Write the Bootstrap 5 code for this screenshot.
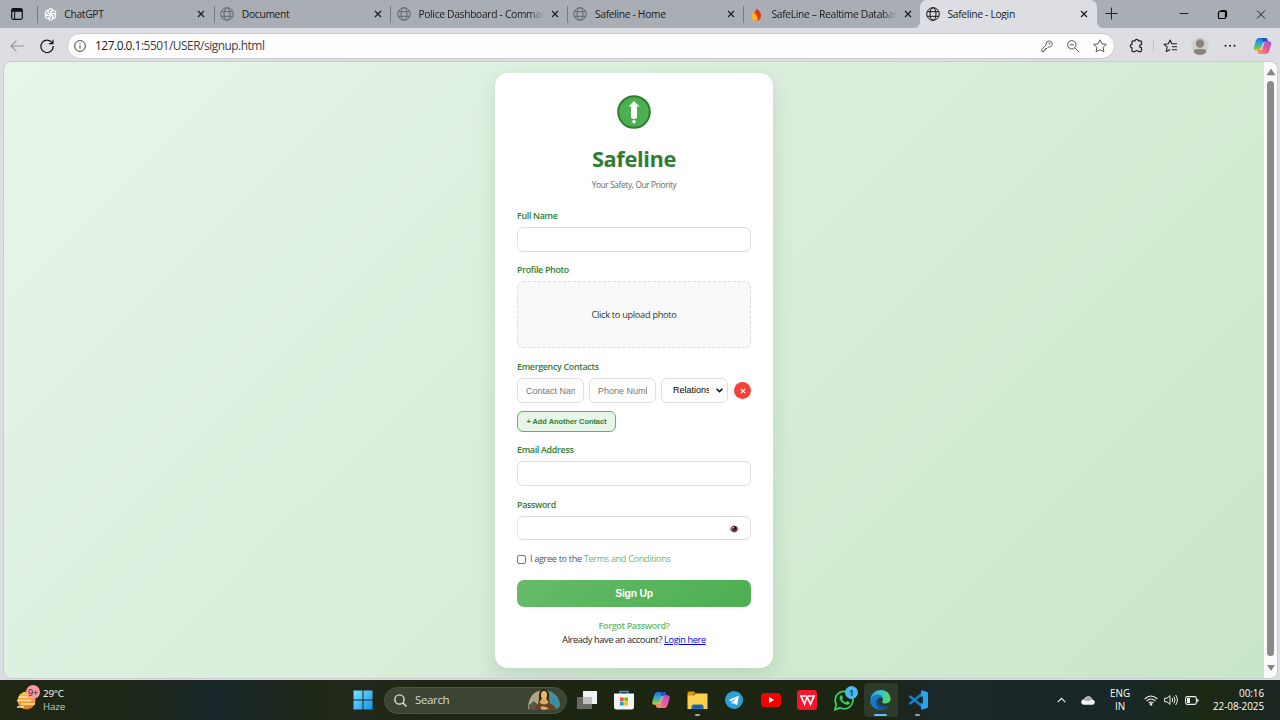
<!DOCTYPE html>
<html lang="en">
<head>
<meta charset="utf-8">
<meta name="viewport" content="width=device-width, initial-scale=1">
<title>Safeline - Login</title>
<link href="https://cdn.jsdelivr.net/npm/bootstrap@5.3.0/dist/css/bootstrap.min.css" rel="stylesheet">
<style>
body{width:1280px;height:720px;overflow:hidden;background:#dcdee3;font-family:"Open Sans","Noto Sans",sans-serif;font-size:11px;line-height:1.2;color:#1b1b1b}
svg{display:block;flex:none;overflow:visible}
/* browser chrome */
.tabstrip{height:28px;background:linear-gradient(#a9aeb5 50%,#dcdee3 50%)}
.tabs-left{width:920px;background:#a9aeb5;border-radius:0 0 6px 0}
.tabs-right{background:#a9aeb5;border-radius:0 0 0 6px}
.tab-menu{width:37.3px;padding-left:11px}
.btab{width:176.7px;padding-left:5.5px}
.btab.sep{border-left:1px solid #777b80}
.sepwrap{height:17px}
.btab .ttl{margin-left:7.5px;width:128.5px;white-space:nowrap;overflow:hidden;font-size:10.3px;letter-spacing:-.33px}
.btab .fade-end{-webkit-mask-image:linear-gradient(90deg,#000 86%,transparent 98%)}
.active-tab{width:177px;background:#dcdee3;border-radius:7px 7px 0 0;padding-left:6px}
.toolbar{height:34px;padding:1px 8px 0 10px}
.addr{width:1048px;height:26px;background:#fdfdfd;border:1px solid #c9cbd1;border-radius:13px;margin-left:13px;padding:0 7px 0 6px}
.addr .url{font-size:11.9px;letter-spacing:-.47px;color:#404040;margin-left:9px}
/* page viewport */
.viewport{margin:0 3px 0 4px;height:616px;border-radius:7px;overflow:hidden;box-shadow:0 0 0 1px #c9ccd1}
.page{width:1260px;background:linear-gradient(135deg,#e8f5e9 0%,#c8e6c9 100%);padding-top:11px}
.sbar{width:13px;background:#fbfbfb;padding:7px 0 7px}
.thumb{width:7px;background:#8a8a8a;border-radius:4px;margin:6px 0 9px}
.signup{width:278px;height:595px;background:#fff;border-radius:13px;padding:22px 22px 0;box-shadow:0 7px 20px rgba(46,90,50,.15);color:#333}
.signup h1{font-size:21.8px;font-weight:700;color:#2e7d32;line-height:28px;margin:15.5px 0 0;letter-spacing:-.35px}
.tagline{font-size:8.3px;line-height:12px;color:#666;margin-top:6.5px;margin-bottom:19px;letter-spacing:-.35px}
.lbl{font-size:8.9px;font-weight:600;line-height:12px;height:12px;color:#2e7d32;margin-bottom:5px;display:block;letter-spacing:-.3px}
.field,.form-control.field,.form-select.field{height:24.5px;min-height:0;border:1px solid #dedede;border-radius:6px;background-color:#fff;font-family:"Liberation Sans",Arial,sans-serif;font-size:9px;line-height:1.2;padding:0 8px;margin-bottom:12.5px}
.field::placeholder{color:#757575}
.upload{height:67px;border:1px dashed #dcdcdc;border-radius:6px;background:#f8f9f8;font-size:9.2px;margin-bottom:13px;letter-spacing:-.28px}
.trio{gap:5px;margin-bottom:8px;height:25px}
.trio .field.field{width:67px;flex:none;margin:0;height:25px}
.trio .form-select.field{color:#000;padding:0 18px 0 11px;background-image:url("data:image/svg+xml,%3Csvg xmlns='http://www.w3.org/2000/svg' viewBox='0 0 7 5'%3E%3Cpath d='M.6.8l2.900 2.900L6.400.8' fill='none' stroke='%23000' stroke-width='1.400'/%3E%3C/svg%3E");background-size:7px 5px;background-position:right 4px center}
.del{width:17px;height:17px;border-radius:50%;background:#f44336;margin-left:1px}
.add{width:99px;height:21px;border:1px solid #5cb560;border-radius:6px;background:#e8f5e9;color:#2e7d32;font:bold 7.4px "Liberation Sans",Arial,sans-serif;margin-bottom:12px;white-space:nowrap}
.agree{height:12px;font-size:9.2px;letter-spacing:-.36px;margin:0 0 14.5px;color:#555}
.box{width:9px;height:9px;border:1px solid #767676;border-radius:2px;margin-right:4px}
.agree a{color:#66bb6a;text-decoration:none}
.go{height:27.5px;border-radius:7px;background:linear-gradient(135deg,#66bb6a,#4caf50);color:#fff;font:bold 10.3px "Liberation Sans",Arial,sans-serif;letter-spacing:-.2px;margin-bottom:13px}
.forgot{font-size:9.1px;line-height:12px;font-weight:600;color:#66bb6a;letter-spacing:-.4px}
.have{font-size:9.2px;line-height:12px;margin-top:2px;letter-spacing:-.37px;color:#222}
.have a{color:#0000ee}
/* taskbar */
.taskbar{height:40px;margin-top:2px;background:linear-gradient(90deg,#1e2713 0,#1d2717 10%,#19272a 17%,#1d2715 25%,#23281b 27%,#1c2612 35%,#1b2511 68%,#1b2729 73%,#192728 88%,#1b2913 94%,#1b2522 100%);color:#fff;font-size:9.8px;padding:0 16px}
.weather{width:337px;line-height:13px;letter-spacing:-.2px}
.wicon{width:24px;height:26px;margin-right:3px}
.search{width:183px;height:27px;border-radius:14px;background:#3c4534;border:1px solid #4b5443;padding:0 5px 0 9px;margin:0 10px 0 11px;color:#d5d9d0;font-size:11.6px;letter-spacing:-.4px}
.app{width:36.7px;height:40px;position:relative}
.app.run::after{content:"";position:absolute;bottom:4px;left:50%;width:5px;height:2px;margin-left:-2.5px;border-radius:1px;background:#a3a69e}
.app.cur::before{content:"";position:absolute;inset:3px 1.5px 3px 1.5px;border-radius:4px;background:#2d3929}
.app.cur::after{width:13px;margin-left:-6.5px;background:#5cc1f3}
.app svg{position:relative}
.tray{line-height:13.5px;font-size:9.9px}
</style>
</head>
<body>
<svg width="0" height="0" class="position-absolute">
<defs>
<symbol id="globe" viewBox="0 0 14 14"><g fill="none" stroke="currentColor" stroke-width="1"><circle cx="7" cy="7" r="6.3"/><ellipse cx="7" cy="7" rx="3" ry="6.3"/><path d="M1.3 4.7h11.4M1.3 9.3h11.4"/></g></symbol>
<symbol id="x" viewBox="0 0 8 8"><path d="M1 1l6 6M7 1l-6 6" stroke="currentColor" stroke-width="1.2"/></symbol>
<linearGradient id="cpa" x1="0" y1="0" x2="0" y2="1"><stop offset="0" stop-color="#2b67e0"/><stop offset=".4" stop-color="#25a9dc"/><stop offset=".75" stop-color="#6fc05a"/><stop offset="1" stop-color="#f0c51d"/></linearGradient>
<linearGradient id="cpb" x1="1" y1="0" x2="0" y2="1"><stop offset="0" stop-color="#a34fe0"/><stop offset=".5" stop-color="#ee5b93"/><stop offset="1" stop-color="#ffa05a"/></linearGradient>
<symbol id="copilot" viewBox="0 0 20 19"><path d="M6 1h7q1.500 0 2 1.500l.8 2.500h-3q-1.500 0-2 1.500L8.600 13q-.6 1.500-2 1.500H3q-3 0-2-4L3 4q1-3 3-3z" fill="url(#cpa)"/><path d="M9.500 1H13q1.500 0 2 1.500l.8 2.500h-3q-1.500 0-2 1.500z" fill="#2451c4"/><path d="M14 18H7q-1.500 0-2-1.500L4.200 14h3q1.500 0 2-1.500L11.400 6q.6-1.500 2-1.500H17q3 0 2 4L17 15q-1 3-3 3z" fill="url(#cpb)"/><path d="M10.800 5.500L7.500 14h1.700L12.500 5z" fill="#fff" opacity=".55"/></symbol>
</defs>
</svg>

<header>
<div class="tabstrip d-flex">
  <div class="tabs-left d-flex align-items-center">
    <div class="tab-menu"><svg width="12" height="12" viewBox="0 0 12 12"><rect x=".7" y=".7" width="10.600" height="10.600" rx="1.500" fill="none" stroke="#111" stroke-width="1.200"/><path d="M1 1h10v2.800H1z" fill="#111"/><path d="M3.700 4v7" stroke="#111"/></svg></div>
    <div class="btab sep sepwrap d-flex align-items-center"><svg width="13" height="13" viewBox="0 0 13 13" fill="none" stroke="#fff" stroke-width="1.050"><g id="petal"><path id="pt" d="M6.500 6.500l-2.200-1.300V3.300q0-2.400 2.200-2.500 1.500 0 2.200 1.200L6.500 3.500v3"/><use href="#pt" transform="rotate(60 6.500 6.500)"/><use href="#pt" transform="rotate(120 6.500 6.500)"/></g><use href="#petal" transform="rotate(180 6.500 6.500)"/></svg><span class="ttl">ChatGPT</span><svg class="ms-1" width="8" height="8"><use href="#x"/></svg></div>
    <div class="btab sep sepwrap d-flex align-items-center"><svg width="14" height="14" color="#62666b"><use href="#globe"/></svg><span class="ttl">Document</span><svg class="ms-1" width="8" height="8"><use href="#x"/></svg></div>
    <div class="btab sep sepwrap d-flex align-items-center"><svg width="14" height="14" color="#62666b"><use href="#globe"/></svg><span class="ttl fade-end">Police Dashboard - Comman</span><svg class="ms-1" width="8" height="8"><use href="#x"/></svg></div>
    <div class="btab sep sepwrap d-flex align-items-center"><svg width="14" height="14" color="#62666b"><use href="#globe"/></svg><span class="ttl">Safeline - Home</span><svg class="ms-1" width="8" height="8"><use href="#x"/></svg></div>
    <div class="btab sep sepwrap d-flex align-items-center"><svg width="13" height="13" viewBox="0 0 13 13"><path d="M6.500.5q3.500 2 4.500 6 .7 4-3 6H4.500q-3-2-2.500-5.500L4 3.500l1 1z" fill="#e03a12"/><path d="M2 6.500l1.500-3L7.500 9q.8 2-1 3.800-4 .2-4.700-3.300z" fill="#ffb91f"/></svg><span class="ttl fade-end" style="margin-left:8.500px">SafeLine – Realtime Databas</span><svg class="ms-1" width="8" height="8"><use href="#x"/></svg></div>
  </div>
  <div class="active-tab d-flex align-items-center btab"><svg width="14" height="14" color="#111"><use href="#globe"/></svg><span class="ttl">Safeline - Login</span><svg class="ms-1" width="8" height="8"><use href="#x"/></svg></div>
  <div class="tabs-right flex-grow-1 d-flex align-items-center">
    <svg width="183" height="28" viewBox="1097 0 183 28" fill="none" stroke="#222"><path d="M1105.500 13.500h12M1111.500 7.500v12"/><path d="M1179.500 13.500h9"/><path stroke-width="1.200" stroke="#000" d="M1220.500 11.500h4q1 0 1 1v5q0 1-1 1h-5q-1 0-1-1v-5q0-1 1-1zM1220.500 10.600h4.500q1.500 0 1.500 1.500v4.800"/><path d="M1257 10.500l8 8M1265 10.500l-8 8"/></svg>
  </div>
</div>
<div class="toolbar d-flex align-items-center">
  <svg width="14" height="12" viewBox="0 0 14 12" fill="none" stroke="#93969b" stroke-width="1.100"><path d="M14 6H1M6.500.7L1 6l5.500 5.300"/></svg>
  <svg style="margin-left:16px" width="14" height="14" viewBox="0 0 14 14" fill="none" stroke="#111" stroke-width="1.200"><path d="M12.500 4.500A6.200 6.200 0 1 0 13.200 7M12.900.8v3.900H9"/></svg>
  <div class="addr d-flex align-items-center">
    <svg width="12" height="12" viewBox="0 0 12 12" fill="none" stroke="#444"><circle cx="6" cy="6" r="5.400"/><path d="M6 5.300v3.500M6 3v1.200"/></svg>
    <span class="url"><span style="color:#171717">127.0.0.1</span>:5501/USER/signup.html</span>
    <div class="ms-auto d-flex align-items-center" style="gap:14px">
      <svg width="12" height="12" viewBox="0 0 12 12" fill="none" stroke="#666"><path d="M5 5Q4.500 1.200 8 .8q3.500.2 3.300 3.400-.4 3.300-4 3L6 8.500H4.500V10H3v1.500H.8V9.200z"/><circle cx="8.500" cy="3.500" r=".6"/></svg>
      <svg width="12" height="12" viewBox="0 0 12 12" fill="none" stroke="#555"><circle cx="4.800" cy="4.800" r="4.200"/><path d="M8 8l4 4M2.800 4.800h4"/></svg>
      <svg width="14" height="14" viewBox="0 0 14 14" fill="none" stroke="#555"><path d="M7 .8l1.900 4 4.400.6-3.200 3 .8 4.400L7 10.700l-3.900 2.100.8-4.400-3.200-3 4.400-.6z" stroke-linejoin="round"/></svg>
    </div>
  </div>
  <svg width="165" height="34" viewBox="1115 28.500 165 34" fill="none" stroke="#222" style="margin-right:-8px">
    <path stroke-width="1.250" stroke-linejoin="round" d="M1133 40.300h2q.2-1.500 1.700-1.500t1.700 1.500h2.100q1 0 1 1V44q-2 0-2 1.600t2 1.600V50q0 1-1 1h-2q-.2-1-1.700-1t-1.700 1H1133q-1 0-1-1v-2.600q-1.700-.3-1.700-1.800t1.700-1.700V41.300q0-1 1-1z"/>
    <path stroke="#bfc1c5" d="M1153.500 39v12"/>
    <path stroke-width="1.100" stroke-linejoin="round" d="M1174 43.300h-2.300l-1.500-3.800-1.900 3.800-4.200.6 3.100 2.800-.9 4.300 3.900-2.100M1171.500 43.300h5.500M1172 46.300h5M1172 49.300h5"/>
    <circle cx="1200" cy="45.500" r="8.700" fill="#d1cfcd" stroke="none"/><circle cx="1200" cy="43" r="4.200" fill="#85827f" stroke="none"/><path d="M1193.500 51q.3-2.500 3-2.500h7q2.700 0 3 2.500-2.300 3.600-6.500 3.600t-6.500-3.600z" fill="#85827f" stroke="none"/>
    <g fill="#222" stroke="none"><circle cx="1225.500" cy="45.300" r="1"/><circle cx="1230" cy="45.300" r="1"/><circle cx="1234.500" cy="45.300" r="1"/></g>
    <use href="#copilot" x="1252.500" y="36.500" width="20" height="18" stroke="none"/>
  </svg>
</div>
</header>

<main class="viewport d-flex">
  <div class="page d-flex justify-content-center align-items-start">
    <form class="signup">
      <svg class="mx-auto" width="34" height="34" viewBox="0 0 34 34"><circle cx="17" cy="17" r="15.800" fill="#4caf50" stroke="#2e7d32" stroke-width="2"/><path d="M17 6l5.500 5.500H20v10q0 2.500-3 2.500t-3-2.500v-10h-2.500z" fill="#fff"/><circle cx="17" cy="26.700" r="1.800" fill="#fff"/></svg>
      <h1 class="text-center">Safeline</h1>
      <div class="tagline text-center">Your Safety, Our Priority</div>
      <label class="lbl">Full Name</label>
      <div class="field"></div>
      <label class="lbl">Profile Photo</label>
      <div class="upload d-flex align-items-center justify-content-center">Click to upload photo</div>
      <label class="lbl">Emergency Contacts</label>
      <div class="trio d-flex align-items-center">
        <input class="form-control field" type="text" placeholder="Contact Name">
        <input class="form-control field" type="tel" placeholder="Phone Number">
        <select class="form-select field"><option>Relationship</option></select>
        <div class="del d-flex align-items-center justify-content-center text-white"><svg width="6" height="6" viewBox="0 0 6 6"><path d="M.8.8l4.400 4.400M5.200.8L.8 5.200" stroke="#fff" stroke-width="1.200"/></svg></div>
      </div>
      <div class="add d-flex align-items-center justify-content-center">+ Add Another Contact</div>
      <label class="lbl">Email Address</label>
      <div class="field" style="margin-bottom:13px"></div>
      <label class="lbl">Password</label>
      <div class="field d-flex align-items-center justify-content-end" style="margin-bottom:13px;padding-right:11px"><svg width="10" height="8" viewBox="0 0 10 8" style="margin-top:2px"><path d="M0 4.500Q2 .5 5 .3 8.500.5 10 4 8 8 5 7.800 2 7.500 0 4.500z" fill="#c9b1b7"/><circle cx="5.300" cy="3.900" r="3" fill="#5b3038"/><circle cx="5.800" cy="3.200" r="1.600" fill="#26181c"/><circle cx="4.300" cy="2.800" r=".7" fill="#fff"/></svg></div>
      <div class="agree d-flex align-items-center"><span class="box"></span><span>I agree to the <a href="#">Terms and Conditions</a></span></div>
      <div class="go d-flex align-items-center justify-content-center">Sign Up</div>
      <div class="forgot text-center">Forgot Password?</div>
      <div class="have text-center">Already have an account? <a href="#">Login here</a></div>
    </form>
  </div>
  <div class="sbar d-flex flex-column align-items-center">
    <svg width="8" height="6" viewBox="0 0 8 6"><path d="M4 0l4 6H0z" fill="#858585" stroke="#858585" stroke-linejoin="round" stroke-width=".6"/></svg>
    <div class="thumb flex-grow-1"></div>
    <svg width="8" height="6" viewBox="0 0 8 6"><path d="M4 6l4-6H0z" fill="#858585"/></svg>
  </div>
</main>

<footer class="taskbar d-flex align-items-center">
  <div class="weather d-flex align-items-center">
    <svg class="wicon" viewBox="0 0 24 26"><defs><linearGradient id="sun" x1="0" y1="0" x2="0" y2="1"><stop offset="0" stop-color="#ffc83d"/><stop offset="1" stop-color="#e07b16"/></linearGradient></defs><circle cx="10.500" cy="13.500" r="9" fill="url(#sun)"/><path d="M3 10h9M1 13.500h14M5 17h14M1 20h7" stroke="#fbe3b0" stroke-width="1.500"/><circle cx="17" cy="5" r="7" fill="#fb98a0"/><text x="17" y="8.500" font-size="9" text-anchor="middle" fill="#222">9+</text></svg>
    <div>29°C<br><span style="color:#c7cbc4">Haze</span></div>
  </div>
  <svg width="20" height="20" viewBox="0 0 20 20"><defs><linearGradient id="win" x1="0" y1="0" x2="1" y2="1"><stop offset="0" stop-color="#7be4ff"/><stop offset="1" stop-color="#0f93ee"/></linearGradient></defs><path d="M.5.500h9v9h-9zM10.500.500h9v9h-9zM.5 10.500h9v9h-9zM10.500 10.500h9v9h-9z" fill="url(#win)"/></svg>
  <div class="search d-flex align-items-center">
    <svg width="13" height="13" viewBox="0 0 13 13" fill="none" stroke="#dfe3da" stroke-width="1.400"><circle cx="5.500" cy="5.500" r="4.600"/><path d="M9 9l3.500 3.500"/></svg>
    <span style="margin-left:8px">Search</span>
    <svg class="ms-auto" width="34" height="24" viewBox="0 0 34 24"><path d="M1 21Q1 9 9 4q8-4 16 0 8 5 8 14l-3 3z" fill="#4c8d92"/><path d="M1 21Q1 9 9 4l4-1v18z" fill="#b0a882"/><path d="M2 17l5-4 5 5 2 4H2z" fill="#5b5344"/><path d="M24 8q7 3 8 11l-6-2z" fill="#2f91a8"/><path d="M12 11q-1-10 5-10 6 0 5 10l1 6H11z" fill="#3a2415"/><path d="M14 7q0-4 3-4t3 4q0 4-3 4.500Q14 11 14 7z" fill="#e9b873"/><path d="M15 10h4l3 5q-5 4-10 0z" fill="#dda665"/><path d="M8 22q1-6 5-7 4 3 8 0 6 1 9 7z" fill="#6b3d25"/><path d="M13 19q5-2 9 2l-7 1z" fill="#dba56b"/></svg>
  </div>
  <div class="d-flex align-items-center" style="margin-left:-8px">
    <div class="app d-flex align-items-center justify-content-center"><svg width="20" height="18" viewBox="0 0 20 18"><path d="M0 6h15v12H0z" fill="#666a63"/><path d="M6 0h14v13H6z" fill="#f2f2f2"/><path d="M6 6h9v7H6z" fill="#c0c1be"/></svg></div>
    <div class="app d-flex align-items-center justify-content-center"><svg width="20" height="20" viewBox="0 0 20 20"><path d="M6 4V1.500h8V4" fill="none" stroke="#39a5dc" stroke-width="1.300"/><path d="M0 3.500h20V17q0 2.500-2.500 2.500h-15Q0 19.500 0 17z" fill="#f1f3f4"/><path d="M6 7.500h3.700v3.700H6z" fill="#f25022"/><path d="M10.300 7.500H14v3.700h-3.700z" fill="#7fba00"/><path d="M6 11.800h3.700v3.700H6z" fill="#00a4ef"/><path d="M10.300 11.800H14v3.700h-3.700z" fill="#ffb900"/></svg></div>
    <div class="app d-flex align-items-center justify-content-center"><svg width="20" height="18"><use href="#copilot"/></svg></div>
    <div class="app run d-flex align-items-center justify-content-center"><svg width="21" height="19" viewBox="0 0 21 19"><path d="M.5 2q0-1.500 1.500-1.500h5l2 2h-2l-1 3H.5z" fill="#d99a14"/><path d="M.5 4.500h6l2-2h12V18H.5z" fill="#ffd04d"/><path d="M4.500 18v-2.500q0-2 2-2h8q2 0 2 2V18z" fill="#1771b8"/><path d="M7.500 15.700h6" stroke="#0f4a86" stroke-width="1.200"/></svg></div>
    <div class="app d-flex align-items-center justify-content-center"><svg width="18" height="18" viewBox="0 0 18 18"><circle cx="9" cy="9" r="9" fill="#2ba0da"/><path d="M3.500 8.900l9.700-4q.8-.2.600.8l-1.600 7.700q-.3 1-1.100.4l-2.500-1.900-1.200 1.200q-.4.300-.5-.3l-.5-2.600z" fill="#fff"/><path d="M6.700 10l5-3.200-4 4-.4 2z" fill="#2ba0da"/></svg></div>
    <div class="app d-flex align-items-center justify-content-center"><svg width="20" height="14" viewBox="0 0 20 14"><rect width="20" height="14" rx="3.500" fill="#f60002"/><path d="M8 4l5 3-5 3z" fill="#fff"/></svg></div>
    <div class="app d-flex align-items-center justify-content-center"><svg width="20" height="20" viewBox="0 0 20 20"><rect width="20" height="20" rx="3" fill="#f9142e"/><path d="M3 6h6M11 6h6L13.500 14 10 7 7.500 14 4 6" fill="none" stroke="#fff" stroke-width="1.700"/></svg></div>
    <div class="app d-flex align-items-center justify-content-center"><svg width="22" height="22" viewBox="0 0 22 22"><path d="M2 20.500l1.300-4.800Q1 11 3.500 6.500 7 2 12 2.500q8 1.500 8 9-1 8-9 8.300-2 0-4-1z" fill="none" stroke="#38d064" stroke-width="1.800"/><path d="M7.500 6.500q1-.7 1.600.3l.8 2q.1.500-.8 1.500 1.300 2.300 3.500 3.200l1.200-1.200q.4-.3 1 0l1.800 1q.5.500-.2 1.500-1.600 1.700-4.500.5-4-2-5.300-5.300-.5-2 .9-3.500z" fill="#38d064"/></svg><svg class="position-absolute" style="left:19px;top:6px" width="13" height="13" viewBox="0 0 13 13"><circle cx="6.500" cy="6.500" r="6.500" fill="#4cb9f1"/><text x="6.500" y="9.700" font-size="9" font-weight="600" text-anchor="middle" fill="#132">1</text></svg></div>
    <div class="app run cur d-flex align-items-center justify-content-center"><svg width="21" height="20" viewBox="0 0 21 20"><defs><linearGradient id="eg"><stop offset="0" stop-color="#2aa9e9"/><stop offset=".5" stop-color="#34c6c8"/><stop offset="1" stop-color="#5bd858"/></linearGradient></defs><path d="M.5 9.500Q1.500.500 10.500 0q8.500.3 10 7.500.7 5.500-5 6-3.500.2-3.200-1.800Q13.500 10 12.500 8 8 3.500.5 9.500z" fill="url(#eg)"/><path d="M.5 9.500q2-5 7.500-5 4 .2 5 3.700-2.200-1.700-4.500.3-2.300 3 .3 6.500 3.700 4 9.700.8-3 4.400-8 4.200Q.500 19-.0 10.500z" fill="#1778c5"/><path d="M8.500 8.500Q6 9.500 5.800 12.500q.2 5 5.200 7.300 4.800-.3 7.500-4-5.500 2.200-9-1.200-2.500-3-1-6.100z" fill="#114f96"/></svg></div>
    <div class="app run d-flex align-items-center justify-content-center"><svg width="20" height="20" viewBox="0 0 20 20"><path d="M14.500 3.500L1.500 14M1.500 6l13 10.500" stroke="#1482cc" stroke-width="2.600"/><path d="M14.500.300L20 2.500v15l-5.500 2.200-1.500-1V1.200z" fill="#2aa2ee"/><path d="M14.800 6L9.500 10l5.300 4z" fill="#1b2518"/></svg></div>
  </div>
  <div class="tray ms-auto d-flex align-items-center">
    <svg width="9" height="6" viewBox="0 0 9 6" style="margin-right:15px"><path d="M.7 5.200L4.500 1.300l3.800 3.900" fill="none" stroke="#eee" stroke-width="1.200"/></svg>
    <svg width="14" height="9" viewBox="0 0 14 9" style="margin-right:15px"><path d="M3 8.700Q0 8.500.2 5.800.500 3.500 3 3.500 4.500.3 7.500.3q3 .2 3.800 3.200Q14 4 13.800 6.500q-.3 2.200-2.500 2.200z" fill="#f2f3f3"/><path d="M1 3.800L4.500 2Q6 .2 8 .4q2.800.5 3.300 3.200-2 0-3.300 1.700z" fill="#a7abae"/></svg>
    <div class="text-center" style="width:20px;margin-right:14px">ENG<br>IN</div>
    <svg width="14" height="11" viewBox="0 0 14 11" fill="none" stroke="#eee" stroke-width="1.100" style="margin-right:6px"><path d="M.7 4Q7-2 13.300 4M2.700 6Q7 2 11.300 6M4.700 8Q7 6 9.300 8"/><circle cx="7" cy="9.300" r=".8" fill="#eee"/></svg>
    <svg width="14" height="12" viewBox="0 0 14 12" fill="none" stroke="#eee" style="margin-right:7px"><path d="M.6 4.200H3L6 1.500v9L3 7.800H.6zM8 4q1.500 2 0 4M9.800 2.500q2.500 3.500 0 7M11.700 1q3.300 5 0 10"/></svg>
    <svg width="14" height="9" viewBox="0 0 14 9"><rect x=".6" y=".6" width="10.800" height="7.800" rx="1.800" fill="none" stroke="#eee" stroke-width="1.100"/><path d="M2 2h3v5H2z" fill="#eee"/><path d="M12.300 3v3h1.200V3z" fill="#eee"/></svg>
    <div class="text-end" style="margin-left:12px;width:53px;white-space:nowrap;letter-spacing:-.05px">00:16<br>22-08-2025</div>
  </div>
</footer>
<script src="https://cdn.jsdelivr.net/npm/bootstrap@5.3.0/dist/js/bootstrap.bundle.min.js"></script>
</body>
</html>
